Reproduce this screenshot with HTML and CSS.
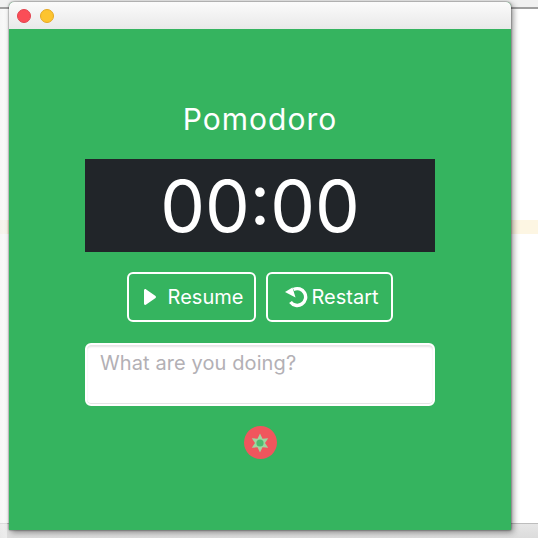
FILE: index.html
```html
<!DOCTYPE html>
<html lang="en">
<head>
  <meta charset="UTF-8">
  <title>Pomodoro</title>
  <link rel="stylesheet" href="styles.css">
</head>
<body>
  <div class="stripe"></div>
  <div class="edge"></div>

  <div class="window">
    <div class="titlebar">
      <span class="light red"></span>
      <span class="light yellow"></span>
    </div>

    <div class="content">
      <h1>Pomodoro</h1>
      <div class="timer">00:00</div>

      <div class="controls">
        <button class="btn btn-resume">
          <svg class="icon-play" width="12" height="16" viewBox="0 0 12 16">
            <path d="M0 1.6 C0 .3 1.2 -.3 2.2 .4 L11.2 6.7 C12.2 7.4 12.2 8.6 11.2 9.3 L2.2 15.6 C1.2 16.3 0 15.7 0 14.4 Z" fill="#fff"/>
          </svg>
          Resume
        </button>
        <button class="btn btn-restart">
          <svg class="icon-restart" width="24" height="24" viewBox="0 0 24 24">
            <path d="M9.5 4.5 A8.4 8.4 0 1 1 6.5 17" fill="none" stroke="#fff" stroke-width="3.4"/>
            <path d="M1 7 L8.5 2.5 L11.5 12.5 Z" fill="#fff"/>
          </svg>
          Restart
        </button>
      </div>

      <textarea class="task" placeholder="What are you doing?"></textarea>

      <div class="tomato">
        <svg width="20" height="20" viewBox="0 0 20 20">
          <path d="M10 .5 L12.5 5.67 L18.2 5.25 L15 10 L18.2 14.75 L12.5 14.33 L10 19.5 L7.5 14.33 L1.8 14.75 L5 10 L1.8 5.25 L7.5 5.67 Z" fill="#9fd6a0"/>
          <circle cx="10" cy="10" r="3.6" fill="#4dbb70"/>
        </svg>
      </div>
    </div>
  </div>
</body>
</html>
```

FILE: styles.css
```css
* {
  box-sizing: border-box;
}

html, body {
  height: 100%;
}

body {
  margin: 0;
  padding: 2px 27px 8px 9px;
  position: relative;
  overflow: hidden;
  background: linear-gradient(#f1f1f1 0, #f1f1f1 7px, #a0a0a0 7px, #a0a0a0 9px, #ffffff 9px, #ffffff 523px, #bdbdbd 523px, #bdbdbd 524px, #e6e6e6 524px, #dcdcdc 100%);
  font-family: "Inter", "Noto Sans", sans-serif;
}

.stripe {
  position: absolute;
  left: 0;
  right: 0;
  top: 220px;
  height: 14px;
  background-color: #fdf6e3;
}

.edge {
  position: absolute;
  left: 0;
  top: 9px;
  bottom: 0;
  width: 7px;
  background: linear-gradient(90deg, #f0f0f0, #f8f8f8);
  opacity: 0.6;
}

.window {
  position: relative;
  height: 528px;
  border-radius: 5px 5px 0 0;
  background-color: #35b45f;
  box-shadow: 0 0 2px rgba(0, 0, 0, 0.7), 2px 2px 6px rgba(0, 0, 0, 0.45);
  display: flex;
  flex-direction: column;
}

.titlebar {
  height: 27px;
  border-radius: 5px 5px 0 0;
  background: linear-gradient(#fbfbfb, #e9e9e9);
  display: flex;
  align-items: center;
  gap: 9px;
  padding-left: 8px;
}

.light {
  width: 14px;
  height: 14px;
  border-radius: 50%;
}

.red {
  background-color: #fb4d57;
  border: 1px solid #e2434f;
}

.yellow {
  background-color: #fdc42f;
  border: 1px solid #e5a823;
}

.content {
  display: flex;
  flex-direction: column;
  align-items: center;
  padding-top: 68px;
}

h1 {
  margin: 0;
  height: 44px;
  line-height: 44px;
  font-size: 30px;
  font-weight: 400;
  letter-spacing: 1px;
  color: #fff;
}

.timer {
  margin-top: 18px;
  width: 350px;
  height: 93px;
  line-height: 95px;
  background-color: #212529;
  color: #fff;
  text-align: center;
  font-size: 71px;
}

.controls {
  margin-top: 20px;
  display: flex;
  gap: 10px;
}

.btn {
  height: 50px;
  display: flex;
  align-items: center;
  justify-content: center;
  background-color: transparent;
  border: 2px solid #fff;
  border-radius: 6px;
  color: #fff;
  font-family: inherit;
  font-size: 20px;
  padding: 0 0 0 4px;
}

.btn-resume {
  width: 129px;
  gap: 12px;
}

.btn-restart {
  width: 127px;
  gap: 3px;
}

.task {
  margin-top: 21px;
  width: 350px;
  height: 63px;
  border: 2px solid #fff;
  border-radius: 6px;
  padding: 6px 13px;
  resize: none;
  font-family: inherit;
  font-size: 20px;
  letter-spacing: 0.1px;
  background-color: #fff;
  box-shadow: inset 0 2px 2px rgba(0, 0, 0, 0.1), inset 0 -1px 0 rgba(0, 0, 0, 0.1);
}

.task::placeholder {
  color: #b3b0b5;
  opacity: 1;
}

.tomato {
  margin-top: 20px;
  width: 33px;
  height: 33px;
  border-radius: 50%;
  background-color: #f0565d;
  display: flex;
  align-items: center;
  justify-content: center;
}
```
